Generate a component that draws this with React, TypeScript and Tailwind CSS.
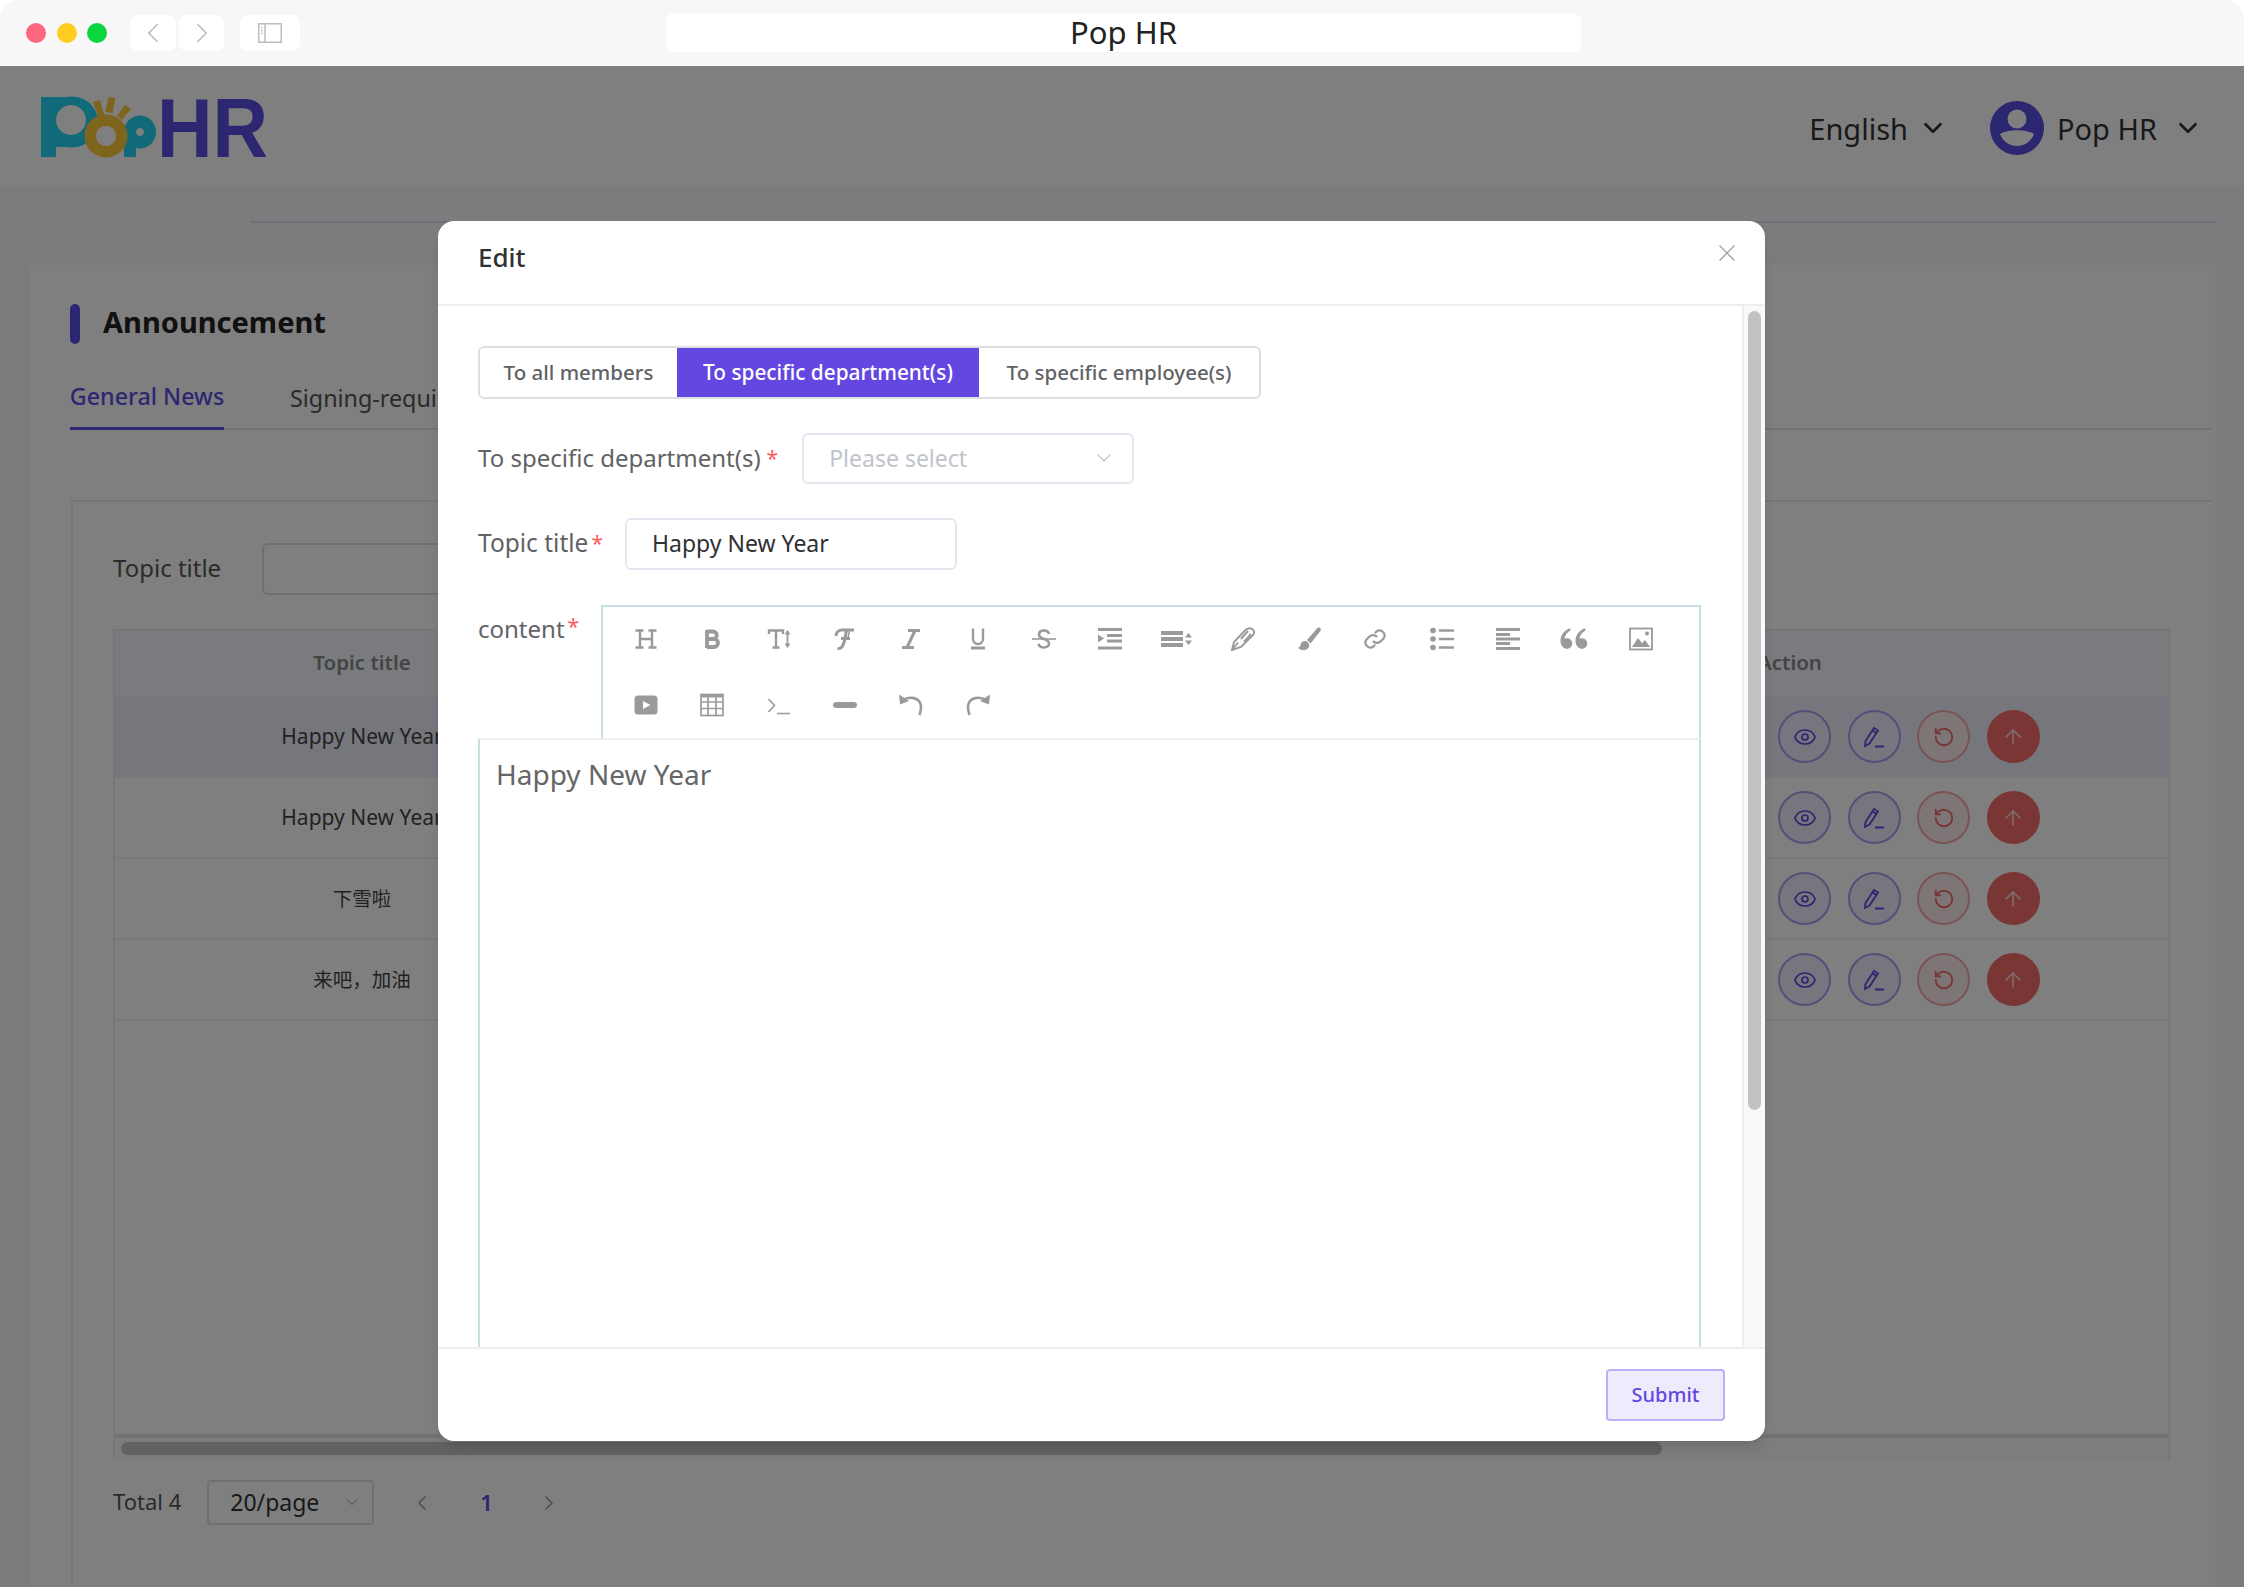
import { ArrowUp, ChevronDown, ChevronLeft, ChevronRight, Eye, RotateCcw, X } from "lucide-react";
import { RiDoubleQuotesL } from "react-icons/ri";

const tool = "h-[24px] w-[24px] fill-none stroke-[#9a9a9a]";

const toolbarRowOne = [
  // heading
  <svg key="h" viewBox="0 0 24 24" className={tool} strokeWidth="2.4"><path d="M6 3v18M18 3v18M6 12h12M1.500 3.500h8M14.500 3.500h8M1.500 20.500h8M14.500 20.500h8" /></svg>,
  // bold
  <svg key="b" viewBox="0 0 24 24" className={tool} strokeWidth="3.800"><path d="M7 3v18M7 4.500h6a3.600 3.600 0 0 1 0 7.500H7M7 12h7a4 4 0 0 1 0 8H7" /></svg>,
  // font size
  <svg key="t" viewBox="0 0 24 24" className={tool} strokeWidth="2.400"><path d="M2 7V3.500h14V7M9 3.500V20.500M5.500 20.500h7" /><path d="M20.500 4v16" strokeWidth="1.800" /><path d="M17.500 7.500L20.500 3l3 4.500zM17.500 16.500L20.500 21l3-4.500z" className="fill-[#9a9a9a]" strokeWidth="0" /></svg>,
  // font family
  <svg key="f" viewBox="0 0 24 24" className={tool} strokeWidth="3"><path d="M3 9c0-4 3-6 6-6h12M13.500 3c-1 6-2 13-4 16-1 2-3 3-5 2M8 11.500h9" /><path d="M17 3c-1 2-1.500 5-2 8" strokeWidth="1.600" /></svg>,
  // italic
  <svg key="i" viewBox="0 0 24 24" className={tool} strokeWidth="3"><path d="M9 3.500h12M3 20.500h12M16 3.500L8 20.500" /></svg>,
  // underline
  <svg key="u" viewBox="0 0 24 24" className={tool} strokeWidth="2.400"><path d="M7 1.500V12a5 5 0 0 0 10 0V1.500" /><path d="M5 21h14" strokeWidth="3" /></svg>,
  // strikethrough
  <svg key="s" viewBox="0 0 24 24" className={tool} strokeWidth="2.600"><path d="M17 7c-.5-2-2.500-3.500-5-3.500-3 0-5 1.600-5 4 0 2.500 2 3.500 5 4.500 3 1 5 2 5 4.500 0 2.300-2 4-5 4-2.800 0-5-1.500-5.500-3.800" /><path d="M0 12h24" strokeWidth="1.600" /></svg>,
  // indent
  <svg key="in" viewBox="0 0 24 24" className={tool} strokeWidth="2.800"><path d="M0 2.500h24M9 8.500h15M9 14h15M0 21h24" /><path d="M0 7.500l6 4-6 4z" className="fill-[#9a9a9a]" strokeWidth="0" /></svg>,
  // line height
  <svg key="lh" viewBox="0 0 31 24" className="h-[24px] w-[31px] shrink-0 fill-none stroke-[#9a9a9a]" strokeWidth="4.200"><path d="M0 6h22M0 12h22M0 18h22" /><path d="M24 10.500L27.500 6l3.500 4.500zM24 13.500L27.500 18l3.500-4.500z" className="fill-[#9a9a9a]" strokeWidth="0" /></svg>,
  // font colour pen
  <svg key="p" viewBox="0 0 24 24" className={tool} strokeWidth="1.900"><path d="M1 23l2-8L15 2.500c2-1.500 5-1.500 7 0 1.500 2 1 4.500-.5 6L10 20z" /><path d="M1 23l6-7.500M10 12l7-8M13 15l7-8" /></svg>,
  // brush
  <svg key="br" viewBox="0 0 24 24" className="h-[24px] w-[24px] fill-[#9a9a9a]"><path d="M23 .8c-.9-.6-2-.3-2.800.5L10 13l3.500 3.500L23.300 4.300c.8-1.100.6-2.800-.3-3.500z" /><path d="M8.500 14c-2.500-.2-4.800 1.500-5 4-.1 1.400-1.200 2.400-2.500 2.800 1.700 2.100 5 3.100 7.800 2 2.600-1.100 3.900-3.300 3.300-5.300-.5-1.500-2-3.300-3.600-3.500z" /></svg>,
  // link
  <svg key="l" viewBox="0 0 24 24" className={tool} strokeWidth="2.200"><path d="M10 14a5 5 0 0 0 7.500.500l3-3a5 5 0 0 0-7-7l-1.700 1.700" /><path d="M14 10a5 5 0 0 0-7.500-.500l-3 3a5 5 0 0 0 7 7l1.700-1.700" /></svg>,
  // list
  <svg key="li" viewBox="0 0 24 24" className={tool} strokeWidth="2.400"><path d="M9 3.500h15M9 12h15M9 20.500h15" /><circle cx="3" cy="3.500" r="2.800" className="fill-[#9a9a9a]" strokeWidth="0" /><circle cx="3" cy="12" r="2.800" className="fill-[#9a9a9a]" strokeWidth="0" /><circle cx="3" cy="20.500" r="2.800" className="fill-[#9a9a9a]" strokeWidth="0" /></svg>,
  // align
  <svg key="a" viewBox="0 0 24 24" className={tool} strokeWidth="2.800"><path d="M0 2.500h24M0 7.500h14M0 12h24M0 16.500h14M0 21.500h24" /></svg>,
  // quote
  <RiDoubleQuotesL key="q" className="h-[36px] w-[36px] shrink-0 text-[#9a9a9a]" />,
  // image
  <svg key="im" viewBox="0 0 24 24" className={tool} strokeWidth="1.800"><rect x="1" y="1.500" width="22" height="21" /><path d="M3 20l6-9 4 5 3-3 5 7z" className="fill-[#9a9a9a]" strokeWidth="0" /><circle cx="18" cy="6.500" r="2" className="fill-[#9a9a9a]" strokeWidth="0" /></svg>,
];

const toolbarRowTwo = [
  // video
  <svg key="v" viewBox="0 0 24 24" className="h-[24px] w-[24px] fill-[#9a9a9a]"><path fillRule="evenodd" d="M4 2.500h16a3.500 3.500 0 0 1 3.500 3.500v12a3.500 3.500 0 0 1-3.500 3.500H4A3.500 3.500 0 0 1 .5 18V6A3.500 3.500 0 0 1 4 2.500zm5 5.500v8l7.500-4z" /></svg>,
  // table
  <svg key="tb" viewBox="0 0 24 24" className={tool} strokeWidth="1.700"><rect x="1" y="1.500" width="22" height="21" /><path d="M1 3h22" strokeWidth="3" /><path d="M1 9h22M1 15.500h22M8 2v20M16 2v20" /></svg>,
  // code
  <svg key="c" viewBox="0 0 24 24" className={tool} strokeWidth="1.600"><path d="M1.500 6l6 6.500-6 6.500M10 20.500h13" /></svg>,
  // horizontal rule
  <svg key="r" viewBox="0 0 24 24" className={tool} strokeWidth="6" strokeLinecap="round"><path d="M3 12h18" /></svg>,
  // undo
  <svg key="ud" viewBox="0 0 24 24" className={tool} strokeWidth="2.600"><path d="M4 7c6-4 17-3 18 6 .3 3-.5 6-1.500 9" /><path d="M0 1.500l1 10 9-3.500z" className="fill-[#9a9a9a]" strokeWidth="0" /></svg>,
  // redo
  <svg key="rd" viewBox="0 0 24 24" className={tool} strokeWidth="2.600"><path d="M20 7c-6-4-17-3-18 6-.3 3 .5 6 1.500 9" /><path d="M24 1.500l-1 10-9-3.500z" className="fill-[#9a9a9a]" strokeWidth="0" /></svg>,
];

const rows = [
  { title: "Happy New Year", size: "text-[21px]", hover: true },
  { title: "Happy New Year", size: "text-[21px]" },
  { title: "下雪啦", size: "text-[19.500px]" },
  { title: "来吧，加油", size: "text-[19.500px]" },
];

function PopLogo() {
  return (
    <svg viewBox="41 97 226 60" className="h-[60px] w-[226px] overflow-visible">
      <path fillRule="evenodd" className="fill-[#20d4ef]" d="M41 97h26a26 25.500 0 1 1 0 50H56v10H41zM71 105a15 15 0 1 0 .1 0z" />
      <path fillRule="evenodd" className="fill-[#20d4ef]" d="M124 157v-25a16 16.500 0 1 1 12 16v9zM140 128a4 4 0 1 0 .1 0z" />
      <path fillRule="evenodd" className="fill-[#ffc93a]" d="M106 114.500a21.500 21.500 0 1 1-.1 0zM106 126a10 10 0 1 0 .1 0z" />
      <path className="fill-[#ffc93a]" d="M93 102l7-2 5 17-6 2zM108.500 97l7 1-3 15-7-1zM125 105l6 4-9 11-5-4z" />
      <text x="157" y="157" fontFamily="Liberation Sans, sans-serif" fontWeight="700" fontSize="84" textLength="111" lengthAdjust="spacingAndGlyphs" className="fill-[#5a4de0]">HR</text>
    </svg>
  );
}

function PenIcon() {
  return (
    <svg viewBox="0 0 24 24" className="h-[24px] w-[24px] fill-none stroke-[#6347e0]" strokeWidth="1.800">
      <path d="M3 21l.5-5L12 3l4 2.500-8.500 13z" />
      <path d="M10.500 5.500l4 2.500M13 21.500h9" />
    </svg>
  );
}

function ActionButtons() {
  return (
    <div className="flex gap-[16.500px]">
      <div className="flex h-[53px] w-[53px] items-center justify-center rounded-full border-2 border-[#a99cf3] bg-[#eeebfc]">
        <Eye className="h-[24px] w-[24px] text-[#6347e0]" strokeWidth={1.700} />
      </div>
      <div className="flex h-[53px] w-[53px] items-center justify-center rounded-full border-2 border-[#a99cf3] bg-[#eeebfc]">
        <PenIcon />
      </div>
      <div className="flex h-[53px] w-[53px] items-center justify-center rounded-full border-2 border-[#f5a8a8] bg-[#fdecec]">
        <RotateCcw className="h-[22px] w-[22px] text-[#f06a6a]" strokeWidth={2} />
      </div>
      <div className="flex h-[53px] w-[53px] items-center justify-center rounded-full bg-[#f46a6a]">
        <ArrowUp className="h-[24px] w-[24px] text-[#fdd]" strokeWidth={1.600} />
      </div>
    </div>
  );
}

export default function App() {
  return (
    <div className="relative h-[1587px] w-[2245px] overflow-hidden bg-white font-['Noto_Sans','Noto_Sans_CJK_SC',sans-serif]">
      <div className="relative flex h-full w-[2244px] flex-col overflow-hidden rounded-t-[20px] bg-[#f6f8fc]">
        {/* browser chrome */}
        <div className="flex h-[66px] shrink-0 items-center bg-[#f7f7f7] pl-[26px]">
          <div className="flex gap-[10.500px]">
            <div className="h-[20px] w-[20px] rounded-full bg-[#ff6680]" />
            <div className="h-[20px] w-[20px] rounded-full bg-[#ffcd1f]" />
            <div className="h-[20px] w-[20px] rounded-full bg-[#0cd63f]" />
          </div>
          <div className="ml-[23px] flex h-[36px] w-[46px] items-center justify-center rounded-[8px] bg-white">
            <ChevronLeft className="h-[34px] w-[34px] text-[#b9b9b9]" strokeWidth={1} />
          </div>
          <div className="ml-[3px] flex h-[36px] w-[45px] items-center justify-center rounded-[8px] bg-white">
            <ChevronRight className="h-[34px] w-[34px] text-[#b9b9b9]" strokeWidth={1} />
          </div>
          <div className="ml-[16px] flex h-[36px] w-[60px] items-center justify-center rounded-[8px] bg-white">
            <svg viewBox="0 0 24 20" className="h-[20px] w-[24px] fill-none stroke-[#bdbdbd]" strokeWidth="1.500">
              <rect x="0.750" y="0.750" width="22.500" height="18.500" />
              <path d="M7 1v18M3 4.500h1.500M3 7.500h1.500M3 10.500h1.500" />
            </svg>
          </div>
          <div className="ml-[366px] flex h-[38px] w-[915px] items-center justify-center rounded-[6px] bg-white pb-[2px] text-[31px] text-[#222]">
            Pop HR
          </div>
        </div>

        {/* app header */}
        <div className="flex h-[120px] shrink-0 items-center justify-between bg-white pl-[41px] pr-[41px] pt-[2px]">
          <PopLogo />
          <div className="mt-[2px] flex items-center text-[29px] text-[#333]">
            <span className="pt-[2px]">English</span>
            <ChevronDown className="ml-[10px] h-[30px] w-[30px] text-[#333]" strokeWidth={2.200} />
            <div className="ml-[42px] flex h-[54px] w-[54px] items-center justify-center rounded-full bg-[#5a4de0]">
              <svg viewBox="0 0 54 54" className="h-[54px] w-[54px]">
                <circle cx="27" cy="18" r="9.500" fill="#fff" />
                <path d="M10 33c8-5 26-5 34 0-3 8-10 12-17 12s-14-4-17-12z" fill="#fff" />
              </svg>
            </div>
            <span className="ml-[13px] pt-[2px]">Pop HR</span>
            <ChevronDown className="ml-[16px] h-[30px] w-[30px] text-[#333]" strokeWidth={2.200} />
          </div>
        </div>

        {/* page */}
        <div className="flex-1 pl-[30px] pr-[29px]">
          <div className="ml-[220px] mt-[35px] h-[2px] bg-[#dcdfe6]" />
          <div className="mt-[42px] h-[1400px] bg-white pl-[40px] pr-[3px] pt-[39px]">
            <div className="flex h-[40px] items-center">
              <div className="h-[40px] w-[10px] rounded-full bg-[#5a4de0]" />
              <h1 className="-mt-[4px] ml-[23px] text-[29px] font-bold text-[#222]">Announcement</h1>
            </div>
            <div className="mt-[16px] flex h-[70px] border-b-2 border-[#e4e7ed] pr-[43px] text-[23.300px]">
              <div className="-mb-[2px] flex h-[70px] w-[154px] items-center justify-center whitespace-nowrap border-b-[3px] border-[#5a4de0] pt-[6px] font-medium text-[#5a4de0]">General News</div>
              <div className="ml-[66px] flex h-[70px] items-center whitespace-nowrap pt-[6px] text-[#555]">Signing-required</div>
            </div>
            <div className="ml-[1px] mt-[70px] h-[1100px] border-l-2 border-t-2 border-[#eaeaea] pl-[40px] pr-[42px] pt-[41px]">
              <div className="flex h-[52px] items-center">
                <span className="w-[149px] pb-[2px] text-[24px] text-[#555]">Topic title</span>
                <div className="h-[52px] w-[330px] rounded-[6px] border-2 border-[#dcdfe6] bg-white" />
              </div>
              <div className="mt-[34px] border-2 border-b-0 border-[#eeeeee]">
                <div className="flex h-[66px] items-center bg-[#f2f6fc] pb-[3px] text-[20.500px] font-semibold text-[#888]">
                  <div className="w-[494px] text-center">Topic title</div>
                  <div className="flex-1" />
                  <div className="w-[416px] pl-[6px]">Action</div>
                </div>
                {rows.map((row, i) => (
                  <div key={i} className={`flex h-[81px] items-center border-b-2 border-[#f0f0f0] text-[#444] ${row.size} ${row.hover ? "bg-[#edeffa]" : "bg-white"}`}>
                    <div className="w-[494px] text-center">{row.title}</div>
                    <div className="flex-1" />
                    <div className="w-[390px]">
                      <ActionButtons />
                    </div>
                  </div>
                ))}
                <div className="h-[413px]" />
                <div className="h-[25px] border-t-[4px] border-[#e6e6e6] bg-[#fafafa] px-[6px] pt-[4px]">
                  <div className="h-[13px] w-[1541px] rounded-full bg-[#c4c4c4]" />
                </div>
              </div>
              <div className="mt-[21px] flex h-[45px] items-center text-[22px]">
                <span className="pb-[2px] text-[#555]">Total 4</span>
                <div className="ml-[26px] flex h-[45px] w-[167px] items-center justify-between rounded-[4px] border-2 border-[#dcdfe6] pb-[1px] pl-[21px] pr-[10px] text-[23px] text-[#333]">
                  20/page
                  <ChevronDown className="h-[20px] w-[20px] text-[#c0c4cc]" strokeWidth={1.500} />
                </div>
                <ChevronLeft className="ml-[36px] h-[24px] w-[24px] text-[#999]" strokeWidth={1.500} />
                <span className="ml-[46px] font-semibold text-[#5a4de0]">1</span>
                <ChevronRight className="ml-[44px] h-[24px] w-[24px] text-[#999]" strokeWidth={1.500} />
              </div>
            </div>
          </div>
        </div>

        {/* dialog mask */}
        <div className="absolute inset-x-0 bottom-0 top-[66px] bg-black/50">
          <div className="ml-[438px] mt-[155px] flex h-[1220px] w-[1327px] flex-col overflow-hidden rounded-[16px] bg-white shadow-lg">
            <div className="relative flex h-[85px] shrink-0 items-center border-b-2 border-[#eeeeee] pb-[10px] pl-[40px]">
              <span className="text-[26px] font-medium text-[#303133]">Edit</span>
              <X className="absolute right-[24px] top-[18px] h-[28px] w-[28px] text-[#a0a0a8]" strokeWidth={1.200} />
            </div>
            <div className="flex min-h-0 flex-1">
              <div className="w-[1304px] pl-[40px] pt-[40px]">
                <div className="flex h-[53px] w-[783px] overflow-hidden rounded-[6px] border-2 border-[#dcdfe6] text-[20.500px] font-medium text-[#606266]">
                  <div className="flex w-[197px] items-center justify-center">To all members</div>
                  <div className="-my-[2px] flex w-[302px] items-center justify-center bg-[#6347e0] text-[20.800px] text-white">To specific department(s)</div>
                  <div className="flex flex-1 items-center justify-center">To specific employee(s)</div>
                </div>
                <div className="mt-[34px] flex h-[51px] items-center">
                  <span className="pb-[2px] text-[24px] text-[#606266]">To specific department(s)</span>
                  <span className="ml-[6px] text-[21px] text-[#ff5a5a]">*</span>
                  <div className="ml-[24px] flex h-[51px] w-[332px] items-center justify-between rounded-[6px] border-2 border-[#e2e6ee] pb-[1px] pl-[25px] pr-[16px] text-[23px] text-[#c0c4cc]">
                    Please select
                    <ChevronDown className="h-[24px] w-[24px] text-[#c0c4cc]" strokeWidth={1.300} />
                  </div>
                </div>
                <div className="mt-[34px] flex h-[52px] items-center">
                  <span className="pb-[2px] text-[24.500px] text-[#606266]">Topic title</span>
                  <span className="ml-[3px] text-[21px] text-[#ff5a5a]">*</span>
                  <div className="ml-[22px] flex h-[52px] w-[332px] items-center rounded-[6px] border-2 border-[#e2e6ee] pb-[2px] pl-[25px] text-[23px] text-[#303133]">
                    Happy New Year
                  </div>
                </div>
                <div className="mt-[35px] flex items-start">
                  <div className="flex pt-[6px]">
                    <span className="text-[24px] text-[#606266]">content</span>
                    <span className="ml-[3px] text-[21px] text-[#ff5a5a]">*</span>
                  </div>
                  <div className="ml-[22px] h-[133px] w-[1100px] border-2 border-b-0 border-[#c8dfe3] pl-[31px] pt-[20px]">
                    <div className="flex h-[24px] gap-[42.300px]">
                      {toolbarRowOne.map((icon, i) => (
                        <div key={i} className="flex h-[24px] w-[24px] items-center justify-center">{icon}</div>
                      ))}
                    </div>
                    <div className="mt-[42px] flex h-[24px] gap-[42.300px]">
                      {toolbarRowTwo.map((icon, i) => (
                        <div key={i} className="flex h-[24px] w-[24px] items-center justify-center">{icon}</div>
                      ))}
                    </div>
                  </div>
                </div>
                <div className="h-[610px] w-[1223px] border-x-2 border-t-2 border-[#c8dfe3] border-t-[#eeeeee] pl-[16px] pt-[13px] text-[28px] text-[#666]">
                  Happy New Year
                </div>
              </div>
              <div className="flex flex-1 justify-center border-l-2 border-[#eeeeee] bg-[#f9f9f9] pt-[5px]">
                <div className="h-[799px] w-[13px] rounded-full bg-[#c2c2c2]" />
              </div>
            </div>
            <div className="flex h-[94px] shrink-0 items-start justify-end border-t-2 border-[#eeeeee] pr-[40px] pt-[20px]">
              <div className="flex h-[52px] w-[119px] items-center justify-center rounded-[4px] border-2 border-[#bcaef7] bg-[#eeebfc] text-[20px] font-medium text-[#6347e0]">
                Submit
              </div>
            </div>
          </div>
        </div>
      </div>
    </div>
  );
}
